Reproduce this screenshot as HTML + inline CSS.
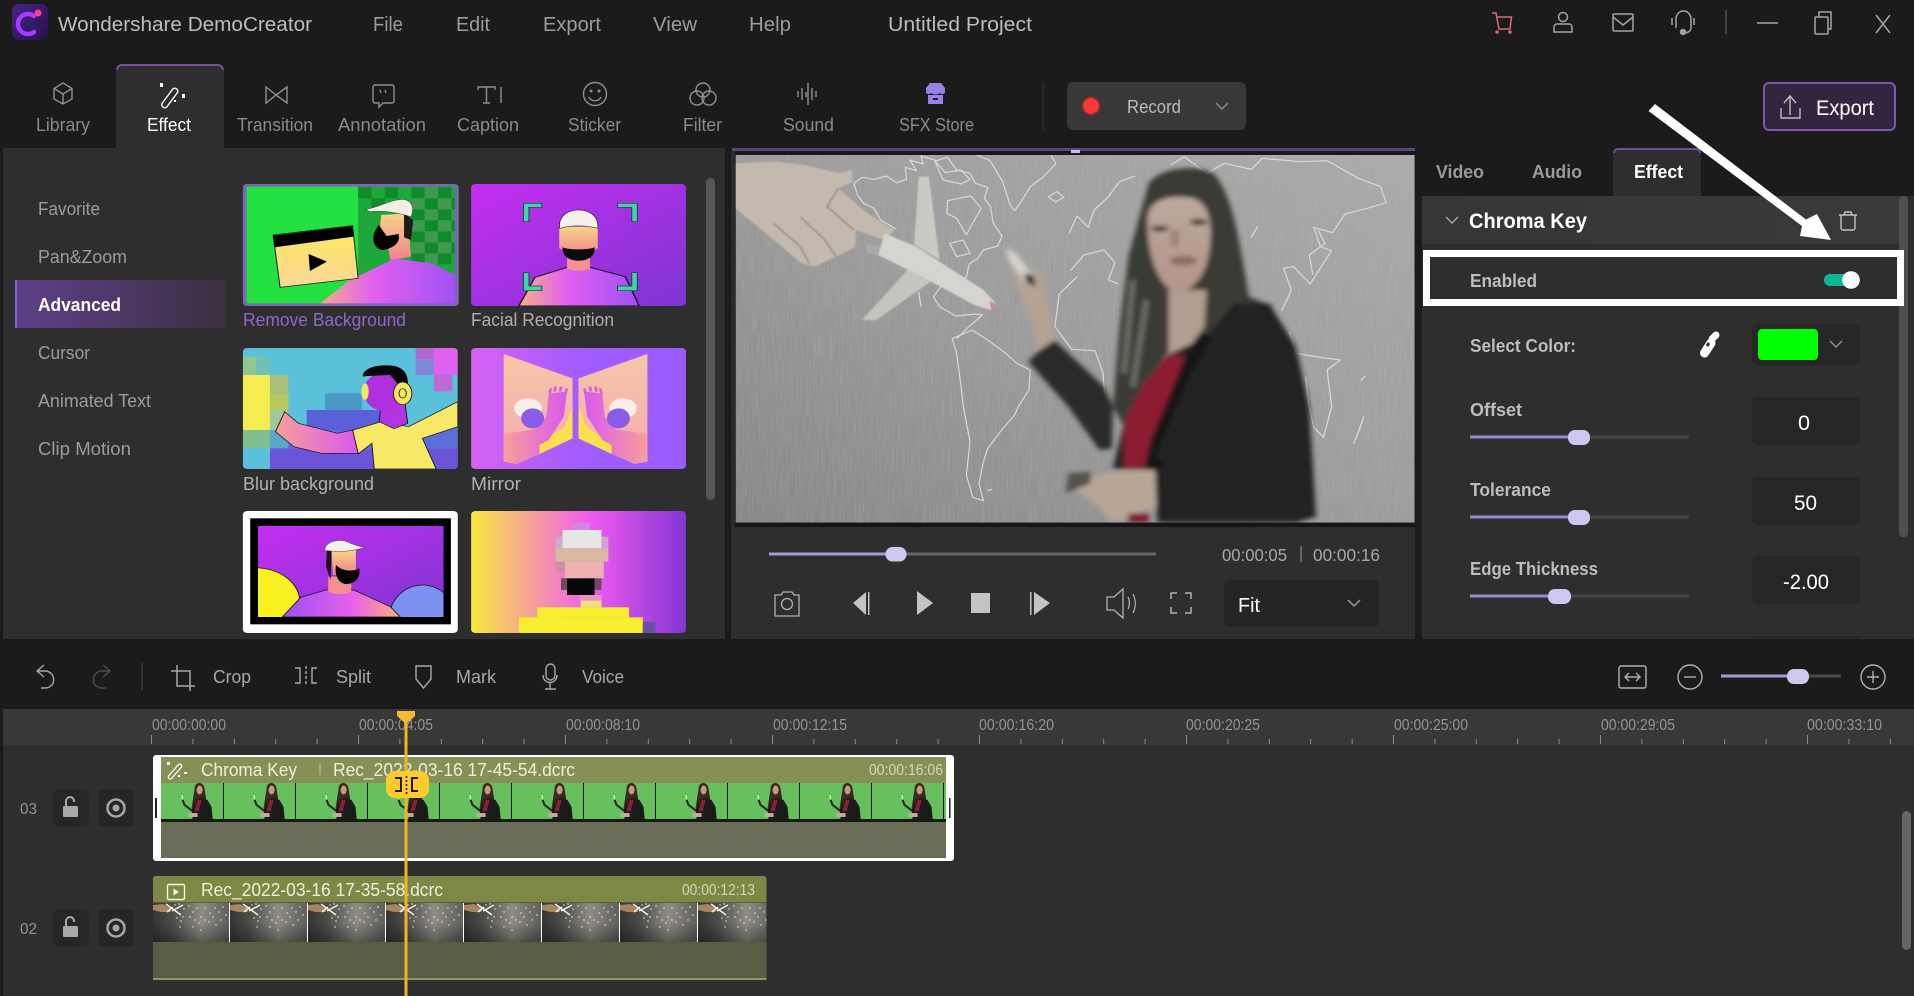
<!DOCTYPE html>
<html lang="en"><head><meta charset="utf-8"><title>Wondershare DemoCreator</title>
<style>
html,body{margin:0;padding:0;background:#1b1b1b;width:1914px;height:996px;overflow:hidden}
svg{display:block}
text{font-family:"Liberation Sans",sans-serif;white-space:pre}
.ns *{vector-effect:non-scaling-stroke}
</style></head><body>
<svg xmlns="http://www.w3.org/2000/svg" width="1914" height="996" viewBox="0 0 1914 996">
<defs>
<linearGradient id="adv" x1="0" x2="1"><stop offset="0" stop-color="#5f3f8a"/><stop offset="1" stop-color="#3a3040"/></linearGradient>
<linearGradient id="logo" x1="0" y1="0" x2="1" y2="1"><stop offset="0" stop-color="#4a2288"/><stop offset="1" stop-color="#261248"/></linearGradient>
<linearGradient id="hd" x1="0" x2="1"><stop offset="0" stop-color="#353535"/><stop offset="1" stop-color="#3a3a3a"/></linearGradient>
<linearGradient id="vid" x1="0" y1="1" x2="1" y2="0"><stop offset="0" stop-color="#868686"/><stop offset=".5" stop-color="#9c9c9c"/><stop offset="1" stop-color="#aaaaaa"/></linearGradient>
<linearGradient id="shirt" x1="0" x2="1"><stop offset="0" stop-color="#f8b088"/><stop offset=".4" stop-color="#e060f0"/><stop offset="1" stop-color="#a050f5"/></linearGradient>
<linearGradient id="shirt2" x1="0" x2="1"><stop offset="0" stop-color="#9a50f5"/><stop offset=".6" stop-color="#e860e8"/><stop offset="1" stop-color="#f8b080"/></linearGradient>
<linearGradient id="skin" x1="0" y1="0" x2="0" y2="1"><stop offset="0" stop-color="#f8d488"/><stop offset="1" stop-color="#f08090"/></linearGradient>
<linearGradient id="card" x1="0" y1="0" x2="0" y2="1"><stop offset="0" stop-color="#fbe75e"/><stop offset="1" stop-color="#fad898"/></linearGradient>
<linearGradient id="t2" x1="0" y1="0" x2="1" y2="1"><stop offset="0" stop-color="#c42ef0"/><stop offset="1" stop-color="#7d36d2"/></linearGradient>
<linearGradient id="t4" x1="0" x2="1"><stop offset="0" stop-color="#d762f4"/><stop offset=".5" stop-color="#a25cff"/><stop offset="1" stop-color="#9a5cff"/></linearGradient>
<linearGradient id="t4p" x1="0" y1="0" x2="0" y2="1"><stop offset="0" stop-color="#f6c6a6"/><stop offset="1" stop-color="#f5aab0"/></linearGradient>
<linearGradient id="arm" x1="0" x2="1"><stop offset="0" stop-color="#f8a098"/><stop offset="1" stop-color="#d858f0"/></linearGradient>
<linearGradient id="t6" x1="0" x2="1"><stop offset="0" stop-color="#f8e83c"/><stop offset=".55" stop-color="#f25cf0"/><stop offset="1" stop-color="#8535d5"/></linearGradient>
<linearGradient id="chalk" x1="0" x2="1"><stop offset="0" stop-color="#353535"/><stop offset=".25" stop-color="#4c4c4a"/><stop offset=".62" stop-color="#8e8c84"/><stop offset="1" stop-color="#5e5d5a"/></linearGradient>
<linearGradient id="chalk2" x1="0" y1="0" x2="0" y2="1"><stop offset=".5" stop-color="#000" stop-opacity="0"/><stop offset="1" stop-color="#000" stop-opacity=".35"/></linearGradient>
<linearGradient id="face" x1="0" y1="0" x2="0" y2="1"><stop offset="0" stop-color="#bba99c"/><stop offset="1" stop-color="#b39488"/></linearGradient>
<filter id="b3" x="-5%" y="-5%" width="110%" height="110%"><feGaussianBlur stdDeviation="6 7"/></filter>
<filter id="b1" x="-5%" y="-5%" width="110%" height="110%"><feGaussianBlur stdDeviation="1.500 2"/></filter>
<filter id="grain" x="0" y="0" width="100%" height="100%"><feTurbulence type="fractalNoise" baseFrequency=".35 .012" numOctaves="2" seed="4"/><feColorMatrix values="0 0 0 0 .5  0 0 0 0 .5  0 0 0 0 .5  1.600 0 0 0 -.55"/></filter>
<clipPath id="ct1"><rect x="529" y="72" width="470" height="366" rx="10"/></clipPath>
<clipPath id="ct2"><rect x="1026" y="72" width="468" height="366" rx="10"/></clipPath>
<clipPath id="ct3"><rect x="529" y="564" width="468" height="363" rx="10"/></clipPath>
<clipPath id="ct4"><rect x="1026" y="564" width="468" height="363" rx="10"/></clipPath>
<clipPath id="ct5"><rect x="562" y="1098" width="404" height="273"/></clipPath>
<clipPath id="ct6"><rect x="1026" y="1053" width="468" height="366" rx="10"/></clipPath>
<clipPath id="vclip"><rect x="35" y="45" width="1521" height="1103"/></clipPath>
<clipPath id="cf1"><rect x="161" y="783" width="785" height="36"/></clipPath>
<clipPath id="cf2"><rect x="153" y="903" width="613.5" height="39"/></clipPath>
<pattern id="ticks" patternUnits="userSpaceOnUse" x="151" y="709" width="207" height="36">
<path d="M.5 26V35M41.9 30V35M83.3 30V35M124.7 30V35M166.1 30V35" stroke="#8a8a8a" stroke-width="1"/>
</pattern>
<g id="wm">
<path d="M-6 10 -14 4 -16 -1" stroke="#222" stroke-width="2" fill="none"/>
<path d="M-16 -2 -16.500 -6" stroke="#e8e8e8" stroke-width="1.300"/>
<path d="M-4 -12C-4 -20 5 -20 6 -12L8 1 2 2 -7 7Z" fill="#38281e"/>
<ellipse cx="1" cy="-11" rx="3" ry="4.500" fill="#c89a80"/>
<path d="M-6 18-7 8-2 -1 3 -3 9 -1 13 6 14 18Z" fill="#1c1c1c"/>
<path d="M-1 -1H3L0 10H-4Z" fill="#8e1f34"/>
<path d="M-10 12H-1V16H-10Z" fill="#c9a892"/>
</g>
<g id="cf">
<rect width="78" height="39" fill="url(#chalk)"/>
<rect width="78" height="39" fill="url(#chalk2)"/>
<path d="M0 2 10 1 17 5 18 9 8 9 0 7Z" fill="#a8845f"/>
<path d="M13 1 28 12M19 8 30 2M14 9 20 4" stroke="#f2f2ec" stroke-width="1.500" fill="none"/>
<g fill="#eeeeea"><circle cx="22" cy="2" r=".7"/><circle cx="26" cy="1" r=".7"/><circle cx="31" cy="6" r=".7"/><circle cx="24" cy="15" r=".7"/><circle cx="28" cy="18" r=".7"/><circle cx="27" cy="24" r=".7"/><circle cx="30" cy="14" r=".7"/><circle cx="36" cy="3" r=".7"/><circle cx="40" cy="9" r=".7"/><circle cx="44" cy="5" r=".7"/><circle cx="37" cy="14" r=".7"/><circle cx="42" cy="17" r=".7"/><circle cx="48" cy="14" r=".7"/><circle cx="46" cy="20" r=".7"/><circle cx="52" cy="17" r=".7"/><circle cx="56" cy="19" r=".7"/><circle cx="60" cy="14" r=".7"/><circle cx="62" cy="5" r=".7"/><circle cx="66" cy="9" r=".7"/><circle cx="70" cy="4" r=".7"/><circle cx="68" cy="17" r=".7"/><circle cx="63" cy="22" r=".7"/><circle cx="52" cy="5" r=".7"/><circle cx="48" cy="27" r=".7"/><circle cx="57" cy="10" r=".7"/><circle cx="73" cy="12" r=".7"/><circle cx="40" cy="24" r=".7"/></g>
</g>
</defs>

<rect width="1914" height="996" fill="#1b1b1b"/>

<!-- title bar -->
<rect x="12" y="4" width="36" height="36" rx="7" fill="url(#logo)"/>
<path d="M34 16A10 10 0 1 0 34 32" fill="none" stroke="#a63cff" stroke-width="4.500" stroke-linecap="round"/>
<circle cx="38" cy="13" r="3.500" fill="#ff3d9a"/>
<g font-size="20" fill="#b8b8b8">
<text x="58" y="31" textLength="254" lengthAdjust="spacingAndGlyphs" fill="#bdbdbd">Wondershare DemoCreator</text>
<text x="373" y="31" textLength="30" lengthAdjust="spacingAndGlyphs" fill="#9c9c9c">File</text>
<text x="456" y="31" textLength="34" lengthAdjust="spacingAndGlyphs" fill="#9c9c9c">Edit</text>
<text x="543" y="31" textLength="58" lengthAdjust="spacingAndGlyphs" fill="#9c9c9c">Export</text>
<text x="653" y="31" textLength="44" lengthAdjust="spacingAndGlyphs" fill="#9c9c9c">View</text>
<text x="749" y="31" textLength="42" lengthAdjust="spacingAndGlyphs" fill="#9c9c9c">Help</text>
<text x="888" y="31" textLength="144" lengthAdjust="spacingAndGlyphs" fill="#bdbdbd">Untitled Project</text>
</g>
<!-- window icons -->
<g fill="none" stroke="#a4a4a4" stroke-width="1.500">
<path d="M1492 13h4l3 16h11l1.500-12h-15" stroke="#dc6a6a"/>
<circle cx="1497" cy="32" r="1" fill="#dc6a6a" stroke="#dc6a6a"/><circle cx="1510" cy="32" r="1" fill="#dc6a6a" stroke="#dc6a6a"/>
<circle cx="1563" cy="17" r="4.500"/><path d="M1554 32v-5a3 3 0 0 1 3-3h12a3 3 0 0 1 3 3v5z"/>
<rect x="1613" y="14" width="20" height="17" rx="1"/><path d="M1613 17l10 8 10-8"/>
<path d="M1676 28V19a7.500 8 0 0 1 15 0v9c0 3-3 5-7 5"/><path d="M1672 18v7M1694 18v7"/>
<circle cx="1683" cy="32" r="2.500" fill="#a4a4a4"/>
<path d="M1726 10v24" stroke="#4c4c4c"/>
<path d="M1757 23h21"/>
<rect x="1815" y="17" width="13" height="17" rx="1"/><path d="M1819 17v-5h12v17h-3"/>
<path d="M1876 15l14 18M1890 15l-14 18"/>
</g>

<!-- main tabs -->
<path d="M116 148V70a5 5 0 0 1 5-5h98a5 5 0 0 1 5 5v78z" fill="#2e2e2e"/>
<path d="M117 70a5 5 0 0 1 5-5h96a5 5 0 0 1 5 5" fill="none" stroke="#74509f" stroke-width="2"/>
<g font-size="18" fill="#8a8a8a">
<text x="36" y="131" textLength="54" lengthAdjust="spacingAndGlyphs">Library</text>
<text x="147" y="131" textLength="44" lengthAdjust="spacingAndGlyphs" fill="#fff">Effect</text>
<text x="237" y="131" textLength="76" lengthAdjust="spacingAndGlyphs">Transition</text>
<text x="338" y="131" textLength="88" lengthAdjust="spacingAndGlyphs">Annotation</text>
<text x="457" y="131" textLength="62" lengthAdjust="spacingAndGlyphs">Caption</text>
<text x="568" y="131" textLength="53" lengthAdjust="spacingAndGlyphs">Sticker</text>
<text x="683" y="131" textLength="39" lengthAdjust="spacingAndGlyphs">Filter</text>
<text x="783" y="131" textLength="51" lengthAdjust="spacingAndGlyphs">Sound</text>
<text x="899" y="131" textLength="75" lengthAdjust="spacingAndGlyphs">SFX Store</text>
</g>
<g fill="none" stroke="#8f8f8f" stroke-width="1.400">
<path d="M63 83 72 88.500V99L63 104 54 99V88.500ZM54 88.500 63 94 72 88.500M63 94V104"/>
<path d="M266 87 276 95 266 103ZM287 87 276 95 287 103Z"/>
<path d="M375 85h17a2 2 0 0 1 2 2v14a2 2 0 0 1-2 2h-9l-4 4v-4h-4a2 2 0 0 1-2-2V87a2 2 0 0 1 2-2z"/><path d="M380 90l1 3M385 90l1 3"/>
<path d="M478 90v-3h17v3M486.500 87v16M483 103h7M501 87v16"/>
<circle cx="595" cy="94" r="11.500"/><path d="M589 97c2 5 10 5 12 0"/><circle cx="591" cy="91" r=".8"/><circle cx="599" cy="91" r=".8"/>
<circle cx="703" cy="90" r="7"/><circle cx="697" cy="98" r="7"/><circle cx="709" cy="98" r="7"/>
<path d="M798 91v6M802 88v12M806 92v5M808 83v22M812 88v12M816 91v6"/>
</g>
<g fill="none" stroke="#fff" stroke-width="1.400">
<path d="M172 90a3 3 0 0 1 5.500 2.500L167.500 106a3 3 0 0 1-5.500-2.500z"/>
</g>
<g fill="#fff"><rect x="160" y="83" width="3" height="4"/><rect x="182" y="94" width="3" height="4"/><rect x="174" y="100" width="2" height="2"/></g>
<path d="M926 88 930 83H941L945 88V92C945 94 942 95 940 93 938 95 933 95 931 93 929 95 926 94 926 92ZM928 95H943V104H928Z" fill="#9a80ea"/><rect x="933" y="98" width="5" height="2" fill="#1b1b1b"/>

<path d="M1043 82v48" stroke="#2e2e2e" stroke-width="1.500"/>
<rect x="1067" y="82" width="179" height="48" rx="6" fill="#383838"/>
<circle cx="1091" cy="106" r="8.500" fill="#f83a3a" stroke="#9c2a2a" stroke-width="1.500"/>
<text x="1127" y="113" font-size="18" textLength="54" lengthAdjust="spacingAndGlyphs" fill="#bdbdbd">Record</text>
<path d="M1216 103l6 6 6-6" fill="none" stroke="#8a8a8a" stroke-width="1.500"/>
<rect x="1764" y="83" width="131" height="47" rx="5" fill="#33243f" stroke="#7b58ae" stroke-width="2"/>
<path d="M1790 97v18M1784 103l6-7 6 7M1781 108v10h19v-10" fill="none" stroke="#bdbdbd" stroke-width="1.400"/>
<text x="1816" y="115" font-size="21" textLength="58" lengthAdjust="spacingAndGlyphs" fill="#fff">Export</text>

<!-- left panel -->
<rect x="3" y="148" width="722" height="491" fill="#2e2e2e"/>
<rect x="15" y="280" width="210" height="48" fill="url(#adv)"/>
<rect x="15" y="280" width="2" height="48" fill="#8d66c9"/>
<g font-size="18" fill="#9c9c9c">
<text x="38" y="215" textLength="62" lengthAdjust="spacingAndGlyphs">Favorite</text>
<text x="38" y="263" textLength="89" lengthAdjust="spacingAndGlyphs">Pan&amp;Zoom</text>
<text x="38" y="311" textLength="83" lengthAdjust="spacingAndGlyphs" fill="#fff" font-weight="700">Advanced</text>
<text x="38" y="359" textLength="52" lengthAdjust="spacingAndGlyphs">Cursor</text>
<text x="38" y="407" textLength="113" lengthAdjust="spacingAndGlyphs">Animated Text</text>
<text x="38" y="455" textLength="93" lengthAdjust="spacingAndGlyphs">Clip Motion</text>
<text x="243" y="326" textLength="163" lengthAdjust="spacingAndGlyphs" fill="#8f67c9">Remove Background</text>
<text x="471" y="326" textLength="143" lengthAdjust="spacingAndGlyphs" fill="#b0b0b0">Facial Recognition</text>
<text x="243" y="490" textLength="131" lengthAdjust="spacingAndGlyphs" fill="#b0b0b0">Blur background</text>
<text x="471" y="490" textLength="50" lengthAdjust="spacingAndGlyphs" fill="#b0b0b0">Mirror</text>
</g>
<rect x="706" y="178" width="9" height="322" rx="4.500" fill="#575757"/>

<!-- thumbnails, authored in stretched coordinates -->
<g transform="translate(0,160) scale(.45914,.33333)">
<!-- T1 -->
<g clip-path="url(#ct1)">
<rect x="529" y="72" width="470" height="366" fill="#22e040"/>
<rect x="780" y="72" width="219" height="300" fill="#1ea73a"/>
<g fill="#108a2b"><rect x="780" y="82" width="29" height="33"/><rect x="838" y="82" width="29" height="33"/><rect x="896" y="82" width="29" height="33"/><rect x="954" y="82" width="29" height="33"/><rect x="809" y="115" width="29" height="33"/><rect x="925" y="115" width="29" height="33"/><rect x="983" y="115" width="16" height="33"/><rect x="896" y="148" width="29" height="33"/><rect x="954" y="148" width="29" height="33"/><rect x="925" y="181" width="29" height="33"/><rect x="983" y="181" width="16" height="33"/><rect x="896" y="214" width="29" height="33"/><rect x="954" y="214" width="29" height="33"/><rect x="925" y="247" width="29" height="33"/><rect x="983" y="247" width="16" height="33"/><rect x="896" y="280" width="29" height="33"/><rect x="954" y="280" width="29" height="33"/></g>
<g fill="#3f9a50"><rect x="925" y="82" width="29" height="33"/><rect x="896" y="115" width="29" height="33"/><rect x="954" y="115" width="29" height="33"/><rect x="925" y="148" width="29" height="33"/><rect x="983" y="148" width="16" height="33"/><rect x="896" y="181" width="29" height="33"/><rect x="954" y="181" width="29" height="33"/><rect x="925" y="214" width="29" height="33"/><rect x="983" y="214" width="16" height="33"/><rect x="896" y="247" width="29" height="33"/><rect x="954" y="247" width="29" height="33"/><rect x="925" y="280" width="29" height="33"/></g>
<path d="M690 438 760 362 860 295 940 310 999 350V438Z" fill="url(#shirt)"/>
<path d="M830 165 888 160 895 290 850 300 845 260 825 250Z" fill="url(#skin)"/>
<path d="M880 160 900 180 895 240 880 232Z" fill="#221a1a"/>
<path d="M825 195C805 230 812 268 835 270 862 262 872 245 868 222L842 228Z" fill="#000"/>
<path d="M797 148C830 140 850 118 880 118 900 125 902 150 895 170 870 160 840 150 805 155Z" fill="#f3eee8" stroke="#222" stroke-width="1"/>
<path d="M595 225 768 197 780 355 610 382Z" fill="url(#card)" stroke="#111" stroke-width="2"/>
<path d="M595 227 767 198 770 230 597 262Z" fill="#000"/>
<path d="M672 282 712 305 675 333Z" fill="#000"/>
</g>
<rect x="533" y="76" width="462" height="358" rx="8" fill="none" stroke="#7b66b5" stroke-width="8"/>
<!-- T2 -->
<g clip-path="url(#ct2)">
<rect x="1026" y="72" width="468" height="366" fill="url(#t2)"/>
<path d="M1130 438 1165 352 1235 322H1285L1362 350 1392 438Z" fill="url(#shirt)" stroke="#16101e" stroke-width="3"/>
<path d="M1235 270H1285V325C1270 335 1250 335 1235 325Z" fill="#f59090"/>
<path d="M1218 200H1302V265L1260 290 1218 265Z" fill="url(#skin)"/>
<path d="M1225 262C1240 270 1280 270 1295 262 1297 290 1280 302 1260 302 1240 302 1225 290 1225 262Z" fill="#0b0b0b"/>
<path d="M1219 205C1215 165 1240 150 1260 150 1280 150 1305 165 1302 205 1275 195 1245 195 1219 205Z" fill="#f5f0ea" stroke="#1a1a1a" stroke-width="1.500"/>
<path d="M1140 185V130H1180V142H1152V185ZM1388 185V130H1345V142H1376V185ZM1140 338V392H1180V378H1152V338ZM1388 338V392H1345V378H1376V338Z" fill="#3fd6a0" stroke="#183a48" stroke-width="2"/>
</g>
<!-- T3 -->
<g clip-path="url(#ct3)">
<rect x="529" y="564" width="468" height="363" fill="#5bc0da"/>
<rect x="529" y="590" width="29" height="55" fill="#8ec88e"/><rect x="558" y="590" width="30" height="55" fill="#6dc2b4"/>
<rect x="529" y="645" width="59" height="165" fill="#f4ec50"/><rect x="588" y="645" width="40" height="55" fill="#a8c078"/><rect x="588" y="700" width="40" height="50" fill="#b8c860"/><rect x="588" y="750" width="40" height="60" fill="#a0c8a0"/>
<rect x="529" y="810" width="59" height="55" fill="#80c090"/><rect x="588" y="810" width="40" height="55" fill="#5aa8c8"/>
<rect x="588" y="865" width="409" height="62" fill="#6a55d8"/>
<rect x="628" y="800" width="369" height="65" fill="#5a70d8"/>
<rect x="668" y="750" width="200" height="60" fill="#5a60d8"/>
<rect x="708" y="700" width="80" height="50" fill="#4a98c8"/>
<rect x="905" y="564" width="40" height="35" fill="#b068d0"/><rect x="945" y="564" width="52" height="80" fill="#e060f0"/><rect x="905" y="600" width="40" height="45" fill="#7f88d8"/><rect x="945" y="644" width="40" height="50" fill="#c068d8"/>
<path d="M765 812 830 785 890 800 997 725V800L920 835 950 927H815L810 850 780 882Z" fill="#f8e868" stroke="#141414" stroke-width="2"/>
<path d="M600 815 620 755 650 790 735 820 768 810 780 880 700 880 640 860Z" fill="url(#arm)" stroke="#141414" stroke-width="2"/>
<path d="M830 730H882L888 790 858 806 826 785Z" fill="#b335e2" stroke="#141414" stroke-width="2"/>
<ellipse cx="838" cy="695" rx="46" ry="58" fill="#b030e0"/>
<path d="M790 650C790 620 830 612 860 618 885 628 890 650 888 685L865 670 850 645 800 648Z" fill="#060606"/>
<ellipse cx="877" cy="700" rx="20" ry="34" fill="#f5e860" stroke="#1a1a1a" stroke-width="2"/><ellipse cx="795" cy="695" rx="8" ry="25" fill="#f5e860"/>
<ellipse cx="877" cy="700" rx="8" ry="14" fill="none" stroke="#1a1a1a" stroke-width="2"/>
</g>
<!-- T4 -->
<g clip-path="url(#ct4)">
<rect x="1026" y="564" width="468" height="363" fill="url(#t4)"/>
<path d="M1097 582 1247 655V835L1125 912 1097 905Z" fill="url(#t4p)"/>
<path d="M1247 740V835L1175 882V850L1230 800Z" fill="#f8e050"/>
<path d="M1097 822 1165 808 1190 770 1195 700 1235 695 1228 770 1195 840 1175 855V882L1125 912 1097 905Z" fill="url(#arm)"/>
<path d="M1197 700 1200 685M1208 695 1210 680M1220 695 1222 680M1232 700 1234 685" stroke="#d85ee8" stroke-width="6"/>
<ellipse cx="1150" cy="745" rx="30" ry="30" fill="#f5f0ea"/>
<ellipse cx="1160" cy="775" rx="25" ry="30" fill="#8a5ce8"/>
<g transform="translate(2507,0) scale(-1,1)">
<path d="M1097 582 1247 655V835L1125 912 1097 905Z" fill="url(#t4p)"/>
<path d="M1247 740V835L1175 882V850L1230 800Z" fill="#f8e050"/>
<path d="M1097 822 1165 808 1190 770 1195 700 1235 695 1228 770 1195 840 1175 855V882L1125 912 1097 905Z" fill="url(#arm)"/>
<path d="M1197 700 1200 685M1208 695 1210 680M1220 695 1222 680M1232 700 1234 685" stroke="#d85ee8" stroke-width="6"/>
<ellipse cx="1150" cy="745" rx="30" ry="30" fill="#f5f0ea"/>
<ellipse cx="1160" cy="775" rx="25" ry="30" fill="#8a5ce8"/>
</g>
</g>
<!-- T5 -->
<rect x="529" y="1053" width="468" height="366" rx="10" fill="#fff"/>
<rect x="545" y="1075" width="437" height="318" fill="#000"/>
<rect x="562" y="1098" width="404" height="273" fill="url(#t2)"/>
<g clip-path="url(#ct5)">
<ellipse cx="555" cy="1325" rx="98" ry="102" fill="#f8f020" stroke="#111" stroke-width="2"/>
<ellipse cx="920" cy="1375" rx="72" ry="100" fill="#7d92f0" stroke="#111" stroke-width="2"/>
<path d="M615 1371 655 1312 710 1290H770L850 1340 872 1371Z" fill="url(#shirt2)" stroke="#111" stroke-width="2"/>
<path d="M715 1250H765V1295C750 1305 730 1305 715 1295Z" fill="#f59090"/>
<path d="M722 1170H775V1245H725Z" fill="url(#skin)"/>
<path d="M712 1170 722 1175 720 1260 710 1220Z" fill="#1c1414"/>
<path d="M732 1215C745 1235 770 1235 783 1225 785 1260 770 1272 752 1272 735 1268 728 1240 732 1215Z" fill="#060606"/>
<path d="M708 1172C705 1150 730 1138 748 1142 760 1145 765 1155 795 1162 780 1170 760 1172 745 1175Z" fill="#f5f0ea" stroke="#1a1a1a" stroke-width="1"/>
</g>
<!-- T6 -->
<g clip-path="url(#ct6)">
<rect x="1026" y="1053" width="468" height="366" fill="url(#t6)"/>
<rect x="1247" y="1090" width="38" height="20" fill="#d088e8"/>
<rect x="1225" y="1110" width="85" height="55" fill="#e6e6e6"/>
<rect x="1210" y="1130" width="15" height="35" fill="#c4b0d0"/><rect x="1310" y="1130" width="15" height="35" fill="#d0a0d8"/>
<rect x="1210" y="1165" width="115" height="40" fill="#d8b8a0"/><rect x="1230" y="1205" width="85" height="50" fill="#eeb0b0"/>
<rect x="1210" y="1205" width="20" height="30" fill="#c890a0"/>
<rect x="1235" y="1255" width="60" height="50" fill="#070707"/><rect x="1222" y="1255" width="13" height="35" fill="#704860"/><rect x="1295" y="1255" width="15" height="35" fill="#704860"/>
<rect x="1262" y="1305" width="48" height="20" fill="#ee90c0"/>
<rect x="1265" y="1322" width="45" height="20" fill="#f0e080"/>
<rect x="1170" y="1342" width="200" height="30" fill="#f8ee30"/>
<rect x="1130" y="1372" width="270" height="47" fill="#f8ee30"/>
<rect x="1400" y="1385" width="28" height="34" fill="#6a50a0"/>
</g>
</g>

<!-- preview -->
<path d="M731 527V153a5 5 0 0 1 5-5h674a5 5 0 0 1 5 5v374z" fill="#2b2b2b"/>
<rect x="732" y="148" width="683" height="3" fill="#5c4580"/>
<rect x="735" y="151" width="680" height="376" fill="#181818"/>
<g class="ns" transform="translate(720,140) scale(.44643,.33333)">
<g clip-path="url(#vclip)">
<rect x="35" y="45" width="1521" height="1103" fill="url(#vid)"/>
<rect x="35" y="45" width="1521" height="1103" filter="url(#grain)" opacity=".35"/>
<g fill="none" stroke="#dedede" stroke-width="1.200" opacity=".92" stroke-linejoin="round">
<path d="M300 130 318 112 345 118 372 108 395 128 418 118 415 82 440 92 425 60 455 72 450 48 485 62 510 52 530 90 560 100 572 130 600 142 592 175 606 200 612 250 632 288 622 318 590 330 578 355 558 372 552 412 528 420 495 440 478 470 492 500 528 528 572 522 588 525 556 562 530 596"/>
<path d="M300 130 308 165 322 190 345 205 360 240 395 268"/>
<path d="M510 182 535 175 562 168 585 205 570 240 552 285 530 235 508 220Z"/>
<path d="M515 310 545 300 560 340 530 350Z"/>
<path d="M480 60 505 98 540 90 560 118 540 132 500 120Z"/>
<path d="M520 596 565 570 600 600 640 640 665 670 695 690 692 750 668 800 660 825 628 875 600 925 590 965 580 1030 590 1082 566 1072 552 1005 560 905 545 800 540 740 530 640Z"/>
<path d="M575 45 605 62 632 122 650 195 660 212 672 190 695 140 725 110 752 72 742 45"/>
<path d="M735 170 755 155 770 172 752 186Z"/>
<path d="M782 280 800 228 825 262 838 210 870 170 895 125 930 108"/>
<path d="M785 392 815 345 860 330 885 368 870 420 892 432"/>
<path d="M800 410 760 462 750 560 788 628 840 632 858 700 862 770"/>
<path d="M1010 75 1040 50 1090 100 1130 70 1190 88 1215 55 1300 65 1360 62 1430 115 1480 140 1492 188 1450 205 1400 222 1372 278 1330 262 1345 320 1370 332 1322 432 1285 380 1262 385 1280 450 1258 512"/>
<path d="M1205 258 1190 292"/>
<path d="M1340 270 1355 310 1320 345 1328 405"/>
<path d="M1275 575 1290 640 1335 650 1390 660 1360 690 1370 800 1352 892 1330 862 1318 790 1312 710"/>
<path d="M1420 910 1442 830 1432 870Z"/><path d="M1445 708 1435 722"/>
<path d="M610 1048 600 1052M445 455 450 500"/>
</g>
<g filter="url(#b1)">
<path d="M35 70 120 65 190 75 268 100 295 90 298 125 265 145 330 220 390 270 372 302 305 270 302 322 260 350 212 380 180 368 130 310 35 205Z" fill="#c3b9ae"/>
<path d="M265 145 240 200 300 270M180 230 235 300 260 350M120 250 180 320 200 370" fill="none" stroke="#a2978c" stroke-width="2"/>
<path d="M360 320 325 312 330 340 370 350Z" fill="#aaa8a4"/>
<path d="M445 110H468L492 360 435 312Z" fill="#cbc9c4"/>
<path d="M420 390 472 425 350 540 318 540Z" fill="#c6c4be"/>
<path d="M368 280 440 320 590 450 618 490 605 510 570 495 480 430 355 345Z" fill="#d6d4d0"/>
<path d="M603 482 618 492 608 510Z" fill="#d08a80"/>
</g>
<g filter="url(#b3)">
<path d="M960 130C985 85 1060 70 1105 100 1150 160 1165 320 1185 470L1240 500 1100 640 1000 640 905 860 880 800 895 560 915 350Z" fill="#3b3a35"/>
<path d="M925 420 905 700M955 480 925 740" stroke="#73726a" stroke-width="5" fill="none"/>
<path d="M958 230C963 170 1020 165 1060 175 1095 190 1105 250 1095 340 1085 420 1050 458 1025 458 985 448 955 350 958 230Z" fill="url(#face)"/>
<path d="M1005 450H1090L1085 560 1035 650H1005Z" fill="#b39c90"/>
<ellipse cx="985" cy="266" rx="20" ry="9" fill="#453830"/>
<ellipse cx="1072" cy="246" rx="20" ry="9" fill="#3d302a"/>
<path d="M1020 270 1018 320" stroke="#9c8478" stroke-width="8"/>
<ellipse cx="1038" cy="362" rx="30" ry="15" fill="#8f6c66"/>
<path d="M1150 490 1230 490 1290 620 1320 800 1335 1130 1290 1148H980L975 990 880 985 905 850 1010 640 1090 590Z" fill="#232323"/>
<path d="M1090 585 1040 700 960 950 985 990" fill="none" stroke="#151515" stroke-width="12"/>
<path d="M690 665 745 595 860 740 880 800 878 925 850 930 780 800Z" fill="#2b2b2b"/>
<path d="M1005 640 1040 650 1030 690 965 900 950 985 905 985 905 850 945 740Z" fill="#8c1c30"/>
<path d="M658 390 715 395 730 450 750 600 715 630 690 510 665 440Z" fill="#b5a293"/>
<path d="M640 325 660 335 700 405 705 440 685 430 650 370Z" fill="#d8d0c8"/>
<path d="M680 400 700 405 708 440 688 430Z" fill="#151515"/>
<path d="M780 1035 860 1000 975 990 975 1100 880 1148 840 1090Z" fill="#b8a595"/>
<path d="M780 1000 830 995 830 1030 775 1060Z" fill="#55524e"/>
<path d="M915 1120H960V1148H915Z" fill="#7e1a2c"/>
</g>
</g>
</g>
<rect x="1071" y="150" width="9" height="3" fill="#c9bff0"/>
<rect x="735" y="523" width="680" height="4" fill="#151515"/>

<rect x="731" y="527" width="684" height="112" fill="#2e2e2e"/>
<rect x="769" y="552.500" width="387" height="3" fill="#676767"/>
<rect x="769" y="552.500" width="127" height="3" fill="#a79ad8"/>
<rect x="885.500" y="547" width="21" height="14.500" rx="7" fill="#cfc7f2"/>
<g font-size="17.500" fill="#a8a8a8">
<text x="1222" y="561" textLength="65" lengthAdjust="spacingAndGlyphs">00:00:05</text>
<text x="1313" y="561" textLength="67" lengthAdjust="spacingAndGlyphs">00:00:16</text>
</g>
<path d="M1301 546v16" stroke="#8a8a8a" stroke-width="1.200"/>
<g fill="#c4c4c4" stroke="none">
<path d="M868 592V615H869.500V592ZM853 603 866 592V615Z"/>
<path d="M917 591 933 603 917 615Z"/>
<rect x="971" y="593" width="19" height="20"/>
<path d="M1030 592V615H1031.500V592ZM1034 592 1050 603 1034 615Z"/>
</g>
<g fill="none" stroke="#b0b0b0" stroke-width="1.300">
<path d="M775 595h6l2-3h9l2 3h5v21h-24z"/><circle cx="787" cy="604" r="5.500"/>
<path d="M1107 597h7l9-8v29l-9-8h-7z"/><path d="M1128 597c2 4 2 8 0 12M1133 594c3 6 3 13 0 19"/>
<path d="M1171 599v-6h6M1191 599v-6h-6M1171 607v6h6M1191 607v6h-6" stroke-width="1.500"/>
</g>
<rect x="1224" y="580" width="155" height="47" rx="5" fill="#252525"/>
<text x="1238" y="612" font-size="20" textLength="22" lengthAdjust="spacingAndGlyphs" fill="#fff">Fit</text>
<path d="M1348 600l6 6 6-6" fill="none" stroke="#9a9a9a" stroke-width="1.500"/>

<!-- right panel -->
<path d="M1422 196h191v-43a5 5 0 0 1 5-5h78a5 5 0 0 1 5 5v43h213v443h-492z" fill="#2e2e2e"/>
<path d="M1614 153a4 4 0 0 1 4-4h78a4 4 0 0 1 4 4" fill="none" stroke="#6d4ca0" stroke-width="2"/>
<g font-size="18" font-weight="700">
<text x="1436" y="178" textLength="48" lengthAdjust="spacingAndGlyphs" fill="#9a9a9a">Video</text>
<text x="1532" y="178" textLength="50" lengthAdjust="spacingAndGlyphs" fill="#9a9a9a">Audio</text>
<text x="1634" y="178" textLength="49" lengthAdjust="spacingAndGlyphs" fill="#fff">Effect</text>
</g>
<rect x="1422" y="196" width="478" height="48" fill="url(#hd)"/>
<path d="M1446 217l6 6 6-6" fill="none" stroke="#a8a8a8" stroke-width="1.400"/>
<text x="1469" y="228" font-size="21" font-weight="700" textLength="118" lengthAdjust="spacingAndGlyphs" fill="#fff">Chroma Key</text>
<path d="M1839 215h18M1844 215l1-3h6l1 3M1841 215v13a2 2 0 0 0 2 2h10a2 2 0 0 0 2-2v-13" fill="none" stroke="#c4c4c4" stroke-width="1.400"/>
<rect x="1899" y="196" width="9" height="341" rx="4" fill="#505050"/>
<rect x="1426.500" y="253.500" width="474" height="49" fill="#2e2e2e" stroke="#fff" stroke-width="7"/>
<g font-size="18" font-weight="700" fill="#bdbdbd">
<text x="1470" y="287" textLength="67" lengthAdjust="spacingAndGlyphs">Enabled</text>
<text x="1470" y="352" textLength="106" lengthAdjust="spacingAndGlyphs">Select Color:</text>
<text x="1470" y="416" textLength="52" lengthAdjust="spacingAndGlyphs">Offset</text>
<text x="1470" y="496" textLength="81" lengthAdjust="spacingAndGlyphs">Tolerance</text>
<text x="1470" y="575" textLength="128" lengthAdjust="spacingAndGlyphs">Edge Thickness</text>
</g>
<rect x="1824" y="274" width="32" height="12" rx="6" fill="#0cb795"/>
<circle cx="1851" cy="280" r="8.800" fill="#fff"/>
<path d="M1704.500 353 1711 343" stroke="#fff" stroke-width="9" stroke-linecap="round"/>
<path d="M1712 339 1716 335" stroke="#fff" stroke-width="7" stroke-linecap="round"/>
<path d="M1707 346 1709 343" stroke="#2e2e2e" stroke-width="3"/>
<rect x="1752" y="324" width="108" height="41" rx="5" fill="#262626"/>
<rect x="1758" y="329" width="60" height="31" rx="4" fill="#00ff00"/>
<path d="M1830 341l6 6 6-6" fill="none" stroke="#9a9a9a" stroke-width="1.300"/>
<g fill="#262626"><rect x="1752" y="397" width="108" height="48" rx="5"/><rect x="1752" y="477" width="108" height="48" rx="5"/><rect x="1752" y="556" width="108" height="48" rx="5"/><rect x="1752" y="636" width="108" height="3"/></g>
<g font-size="21" fill="#fff">
<text x="1798" y="430" textLength="12" lengthAdjust="spacingAndGlyphs">0</text>
<text x="1794" y="510" textLength="23" lengthAdjust="spacingAndGlyphs">50</text>
<text x="1783" y="589" textLength="46" lengthAdjust="spacingAndGlyphs">-2.00</text>
</g>
<g fill="#454545"><rect x="1470" y="435.500" width="219" height="3"/><rect x="1470" y="515.500" width="219" height="3"/><rect x="1470" y="594.500" width="219" height="3"/></g>
<g fill="#9a8ad0"><rect x="1470" y="435.500" width="109" height="3"/><rect x="1470" y="515.500" width="109" height="3"/><rect x="1470" y="594.500" width="89" height="3"/></g>
<g fill="#cfc7f2"><rect x="1568" y="430" width="22" height="15" rx="7"/><rect x="1568" y="510" width="22" height="15" rx="7"/><rect x="1548" y="589" width="23" height="15" rx="7"/></g>

<!-- arrow -->
<path d="M1655 104 1806 219.500 1817 214 1831 240 1800 236 1802 226 1648.500 111Z" fill="#fff"/>

<!-- toolbar -->
<g fill="none" stroke="#a8a8a8" stroke-width="1.400">
<path d="M44 665 37 671 44 677M37 671H45C56 671 57 688 45 688H41"/>
<path d="M103 665 110 671 103 677M110 671H102C91 671 90 688 102 688H106" stroke="#4c4c4c"/>
<path d="M142 663v27" stroke="#3e3e3e"/>
<path d="M177 665v21h18M171 671h19v20" stroke-width="1.500"/>
<path d="M295 668h5v15h-5M317 668h-5v15h5"/>
<path d="M306 666v19" stroke-dasharray="3 2"/>
<path d="M416 666h15v13l-7.500 9-7.500-9z" />
<rect x="546" y="664" width="9" height="16" rx="4.500"/><path d="M543 675c0 10 14 10 14 0M550 683v6M545 689h11"/>
</g>
<g font-size="18" fill="#a8a8a8">
<text x="213" y="683" textLength="38" lengthAdjust="spacingAndGlyphs">Crop</text>
<text x="336" y="683" textLength="35" lengthAdjust="spacingAndGlyphs">Split</text>
<text x="456" y="683" textLength="40" lengthAdjust="spacingAndGlyphs">Mark</text>
<text x="582" y="683" textLength="42" lengthAdjust="spacingAndGlyphs">Voice</text>
</g>
<g fill="none" stroke="#b0b0b0" stroke-width="1.400">
<rect x="1619" y="666" width="27" height="22" rx="2"/><path d="M1626 677h13M1629 673l-4 4 4 4M1636 673l4 4-4 4"/>
<circle cx="1690" cy="677" r="12"/><path d="M1684 677h12"/>
<circle cx="1873" cy="677" r="12"/><path d="M1867 677h12M1873 671v12"/>
</g>
<rect x="1721" y="674.500" width="120" height="3" fill="#4a4a4a"/><rect x="1721" y="674.500" width="77" height="3" fill="#a79ad8"/>
<rect x="1787" y="669" width="22" height="15" rx="7" fill="#cfc7f2"/>

<!-- timeline -->
<rect x="3" y="709" width="1911" height="36" fill="#383838"/>
<rect x="3" y="745" width="1911" height="251" fill="#2e2e2e"/>
<rect x="151" y="709" width="1763" height="36" fill="url(#ticks)"/>
<g font-size="15.500" fill="#949494">
<text x="152" y="730" textLength="74" lengthAdjust="spacingAndGlyphs">00:00:00:00</text>
<text x="359" y="730" textLength="74" lengthAdjust="spacingAndGlyphs">00:00:04:05</text>
<text x="566" y="730" textLength="74" lengthAdjust="spacingAndGlyphs">00:00:08:10</text>
<text x="773" y="730" textLength="74" lengthAdjust="spacingAndGlyphs">00:00:12:15</text>
<text x="979" y="730" textLength="75" lengthAdjust="spacingAndGlyphs">00:00:16:20</text>
<text x="1186" y="730" textLength="74" lengthAdjust="spacingAndGlyphs">00:00:20:25</text>
<text x="1394" y="730" textLength="74" lengthAdjust="spacingAndGlyphs">00:00:25:00</text>
<text x="1601" y="730" textLength="74" lengthAdjust="spacingAndGlyphs">00:00:29:05</text>
<text x="1807" y="730" textLength="75" lengthAdjust="spacingAndGlyphs">00:00:33:10</text>
<text x="20" y="814" textLength="17" lengthAdjust="spacingAndGlyphs">03</text>
<text x="20" y="934" textLength="17" lengthAdjust="spacingAndGlyphs">02</text>
</g>
<g fill="#262626"><rect x="53" y="790" width="36" height="36" rx="5"/><rect x="98" y="790" width="36" height="36" rx="5"/><rect x="53" y="910" width="36" height="36" rx="5"/><rect x="98" y="910" width="36" height="36" rx="5"/></g>
<g>
<rect x="63" y="806" width="15" height="11" rx="1" fill="#a8a8a8"/><path d="M66 806v-5a4 4 0 0 1 8 0v1" fill="none" stroke="#a8a8a8" stroke-width="2"/>
<circle cx="116" cy="808" r="8.500" fill="none" stroke="#a8a8a8" stroke-width="2.500"/><circle cx="116" cy="808" r="3.500" fill="#a8a8a8"/>
<rect x="63" y="926" width="15" height="11" rx="1" fill="#a8a8a8"/><path d="M66 926v-5a4 4 0 0 1 8 0v1" fill="none" stroke="#a8a8a8" stroke-width="2"/>
<circle cx="116" cy="928" r="8.500" fill="none" stroke="#a8a8a8" stroke-width="2.500"/><circle cx="116" cy="928" r="3.500" fill="#a8a8a8"/>
</g>

<!-- clip 1 -->
<rect x="153" y="755" width="801" height="106" rx="3" fill="#fff"/>
<rect x="161" y="757" width="785" height="101" fill="#6a6d58"/>
<rect x="161" y="757" width="785" height="26" fill="#869056"/>
<rect x="161" y="783" width="785" height="36" fill="#66c05e"/>
<rect x="161" y="819" width="785" height="3" fill="#141b10"/>
<g clip-path="url(#cf1)">
<use href="#wm" x="198.600" y="801"/><use href="#wm" x="270.600" y="801"/><use href="#wm" x="342.600" y="801"/><use href="#wm" x="414.600" y="801"/><use href="#wm" x="486.600" y="801"/><use href="#wm" x="558.600" y="801"/><use href="#wm" x="630.600" y="801"/><use href="#wm" x="702.600" y="801"/><use href="#wm" x="774.600" y="801"/><use href="#wm" x="846.600" y="801"/><use href="#wm" x="918.600" y="801"/>
<path d="M223.500 783v36M295.500 783v36M367.500 783v36M439.500 783v36M511.500 783v36M583.500 783v36M655.500 783v36M727.500 783v36M799.500 783v36M871.500 783v36M943.500 783v36" stroke="#141414" stroke-width="1"/>
</g>
<rect x="155" y="798" width="2" height="20" fill="#222"/><rect x="949" y="798" width="1.500" height="20" fill="#222"/>
<path d="M178 765a2 2 0 0 1 3.500 2L172 778a2 2 0 0 1-3.500-2z" fill="none" stroke="#fff" stroke-width="1.200"/>
<g fill="#fff"><rect x="167" y="762" width="3" height="3"/><rect x="184" y="772" width="3" height="2"/><rect x="178" y="775" width="2" height="2"/></g>
<g font-size="18" fill="#eeeede">
<text x="201" y="776" textLength="96" lengthAdjust="spacingAndGlyphs">Chroma Key</text>
<text x="333" y="776" textLength="242" lengthAdjust="spacingAndGlyphs">Rec_2022-03-16 17-45-54.dcrc</text>
</g>
<path d="M320 763v12" stroke="#b8bca0" stroke-width="1.200"/>
<text x="869" y="775" font-size="15.500" textLength="74" lengthAdjust="spacingAndGlyphs" fill="#d4d6b8">00:00:16:06</text>

<!-- clip 2 -->
<rect x="153" y="876" width="613.500" height="104" rx="3" fill="#5a5c44"/>
<path d="M153 902v-23a3 3 0 0 1 3-3h607.500a3 3 0 0 1 3 3v23z" fill="#7d8845"/>
<rect x="153" y="978" width="613.500" height="2" fill="#8f9864"/>
<g clip-path="url(#cf2)">
<use href="#cf" x="153" y="903"/><use href="#cf" x="230" y="903"/><use href="#cf" x="308" y="903"/><use href="#cf" x="386" y="903"/><use href="#cf" x="464" y="903"/><use href="#cf" x="542" y="903"/><use href="#cf" x="620" y="903"/><use href="#cf" x="698" y="903"/>
<path d="M229.500 903v39M307.500 903v39M385.500 903v39M463.500 903v39M541.500 903v39M619.500 903v39M697.500 903v39" stroke="#fff" stroke-width="1"/>
</g>
<rect x="167.500" y="884.500" width="17" height="15" rx="1.500" fill="none" stroke="#f4f4e8" stroke-width="1.400"/>
<path d="M173.500 888.500 179 892 173.500 895.500Z" fill="#f4f4e8"/>
<text x="201" y="896" font-size="18" textLength="242" lengthAdjust="spacingAndGlyphs" fill="#eeeede">Rec_2022-03-16 17-35-58.dcrc</text>
<text x="682" y="895" font-size="15.500" textLength="73" lengthAdjust="spacingAndGlyphs" fill="#d4d6b8">00:00:12:13</text>

<!-- playhead -->
<rect x="404.500" y="711" width="3" height="285" fill="#f0b429"/>
<path d="M397 711H415V716L406 724 397 716Z" fill="#f5ba33"/>
<rect x="386" y="771" width="43" height="27" rx="9" fill="#fecb2f"/>
<path d="M395 778h6v13h-6M418 778h-6v13h6" fill="none" stroke="#1c1c1c" stroke-width="2"/>
<path d="M406.500 776v18" stroke="#1c1c1c" stroke-width="1.500" stroke-dasharray="2 2"/>

<rect x="1902" y="811" width="9" height="139" rx="4.500" fill="#666"/>
</svg>
</body></html>
